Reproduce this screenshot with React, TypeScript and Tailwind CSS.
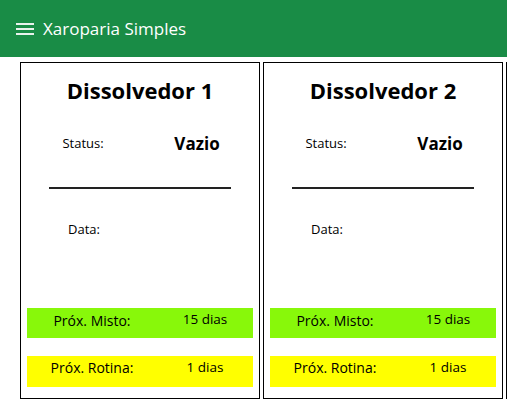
type Dissolvedor = {
  nome: string
  status: string
  data: string
  misto: string
  rotina: string
}

const dissolvedores: Dissolvedor[] = [
  { nome: 'Dissolvedor 1', status: 'Vazio', data: '', misto: '15 dias', rotina: '1 dias' },
  { nome: 'Dissolvedor 2', status: 'Vazio', data: '', misto: '15 dias', rotina: '1 dias' },
]

function Card({ d }: { d: Dissolvedor }) {
  return (
    <div className="flex flex-col shrink-0 w-[240px] h-[337px] border border-black bg-white">
      <h2 className="mt-[12px] h-[30px] text-center text-[22px] font-bold leading-[30px]">{d.nome}</h2>

      <div className="mt-[27px] flex h-[24px] items-center">
        <span className="w-[124px] text-center text-[13px]">Status:</span>
        <span className="w-[104px] text-center text-[17px] font-bold">{d.status}</span>
      </div>

      <div className="mx-auto mt-[31px] h-[2px] w-[182px] bg-[#222]"></div>

      <div className="mt-[29px] flex h-[24px] items-center">
        <span className="w-[126px] text-center text-[13px]">Data:</span>
        <span className="w-[102px] text-center text-[13px]">{d.data}</span>
      </div>

      <div className="mx-[6px] mt-[66px] flex h-[30px] bg-[#88f80a] text-[14px]">
        <span className="w-[130px] pt-[3px] text-center leading-[20px]">Próx. Misto:</span>
        <span className="w-[96px] pt-[1px] text-center text-[13.5px] leading-[20px]">{d.misto}</span>
      </div>

      <div className="mx-[6px] mt-[18px] flex h-[31px] bg-[#ffff00] text-[14px]">
        <span className="w-[130px] pt-[2px] text-center leading-[20px]">Próx. Rotina:</span>
        <span className="w-[96px] pt-[1px] text-center text-[13.5px] leading-[20px]">{d.rotina}</span>
      </div>
    </div>
  )
}

export default function App() {
  return (
    <div className="h-[402px] w-[507px] overflow-hidden bg-white text-black" style={{ fontFamily: '"Open Sans", "Noto Sans", sans-serif' }}>
      <header className="flex h-[57px] items-center bg-[#198c46] pl-[16px] text-white">
        <svg width="18" height="12" viewBox="0 0 18 12" className="mt-[1px]">
          <rect x="0" y="0" width="18" height="2" fill="#e8f2ec" />
          <rect x="0" y="5" width="18" height="2" fill="#e8f2ec" />
          <rect x="0" y="10" width="18" height="2" fill="#e8f2ec" />
        </svg>
        <span className="ml-[9px] text-[17px]">Xaroparia Simples</span>
      </header>

      <main className="flex gap-[3px] pl-[20px] pt-[5px]">
        {dissolvedores.map((d) => (
          <Card key={d.nome} d={d} />
        ))}
        {/* next card, cut off at the window edge */}
        <div className="h-[337px] w-[40px] shrink-0 border-l border-t border-b border-black"></div>
      </main>
    </div>
  )
}
